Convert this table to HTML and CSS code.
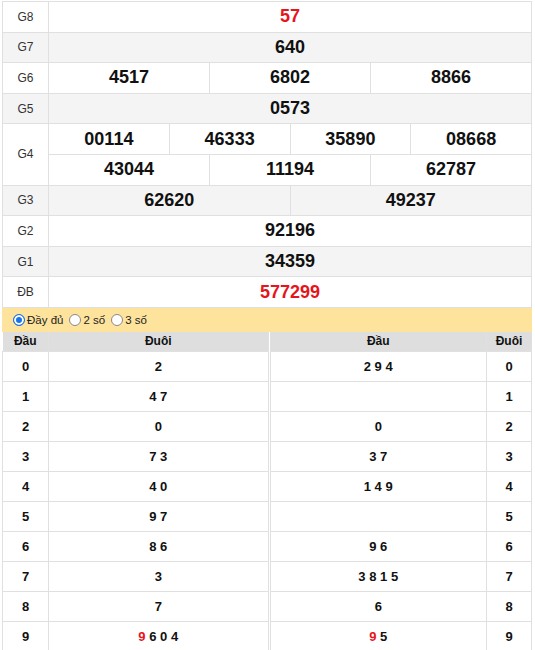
FILE: index.html
```html
<!DOCTYPE html>
<html>
<head>
<meta charset="utf-8">
<link rel="stylesheet" href="styles.css">
</head>
<body>
<div class="wrap">
  <table class="prize">
    <colgroup>
      <col class="c-label">
      <col><col><col><col><col><col><col><col><col><col><col><col>
    </colgroup>
    <tr><td class="lbl">G8</td><td colspan="12" class="num red">57</td></tr>
    <tr class="alt"><td class="lbl">G7</td><td colspan="12" class="num">640</td></tr>
    <tr><td class="lbl">G6</td><td colspan="4" class="num">4517</td><td colspan="4" class="num">6802</td><td colspan="4" class="num">8866</td></tr>
    <tr class="alt"><td class="lbl">G5</td><td colspan="12" class="num">0573</td></tr>
    <tr><td class="lbl" rowspan="2">G4</td><td colspan="3" class="num">00114</td><td colspan="3" class="num">46333</td><td colspan="3" class="num">35890</td><td colspan="3" class="num">08668</td></tr>
    <tr><td colspan="4" class="num">43044</td><td colspan="4" class="num">11194</td><td colspan="4" class="num">62787</td></tr>
    <tr class="alt"><td class="lbl">G3</td><td colspan="6" class="num">62620</td><td colspan="6" class="num">49237</td></tr>
    <tr><td class="lbl">G2</td><td colspan="12" class="num">92196</td></tr>
    <tr class="alt"><td class="lbl">G1</td><td colspan="12" class="num">34359</td></tr>
    <tr><td class="lbl">ĐB</td><td colspan="12" class="num red">577299</td></tr>
  </table>

  <div class="opts">
    <label class="opt"><span class="radio on"></span>Đầy đủ</label>
    <label class="opt"><span class="radio"></span>2 số</label>
    <label class="opt"><span class="radio"></span>3 số</label>
  </div>

  <div class="loto">
    <table class="lt left">
      <colgroup><col class="c-head"><col></colgroup>
      <tr class="hd"><th>Đầu</th><th>Đuôi</th></tr>
      <tr><td>0</td><td>2</td></tr>
      <tr><td>1</td><td>4 7</td></tr>
      <tr><td>2</td><td>0</td></tr>
      <tr><td>3</td><td>7 3</td></tr>
      <tr><td>4</td><td>4 0</td></tr>
      <tr><td>5</td><td>9 7</td></tr>
      <tr><td>6</td><td>8 6</td></tr>
      <tr><td>7</td><td>3</td></tr>
      <tr><td>8</td><td>7</td></tr>
      <tr><td>9</td><td><span class="red">9</span> 6 0 4</td></tr>
    </table>
    <table class="lt right">
      <colgroup><col><col class="c-tail"></colgroup>
      <tr class="hd"><th>Đầu</th><th>Đuôi</th></tr>
      <tr><td>2 9 4</td><td>0</td></tr>
      <tr><td></td><td>1</td></tr>
      <tr><td>0</td><td>2</td></tr>
      <tr><td>3 7</td><td>3</td></tr>
      <tr><td>1 4 9</td><td>4</td></tr>
      <tr><td></td><td>5</td></tr>
      <tr><td>9 6</td><td>6</td></tr>
      <tr><td>3 8 1 5</td><td>7</td></tr>
      <tr><td>6</td><td>8</td></tr>
      <tr><td><span class="red">9</span> 5</td><td>9</td></tr>
    </table>
  </div>
</div>
</body>
</html>
```

FILE: styles.css
```css
html, body {
  margin: 0;
  padding: 0;
  background: #fff;
}
body {
  font-family: "Liberation Sans", Arial, sans-serif;
  color: #111;
}
.wrap {
  width: 530px;
  padding: 1px 0 0 2px;
}
table {
  border-collapse: collapse;
  table-layout: fixed;
}
.prize {
  width: 530px;
}
.prize td {
  border: 1px solid #e0e0e0;
  height: 29.6px;
  padding: 0;
  text-align: center;
}
.c-label {
  width: 46px;
}
.prize .alt td {
  background: #f4f4f4;
}
.lbl {
  font-size: 12px;
  color: #333;
  font-weight: normal;
}
.num {
  font-size: 18px;
  font-weight: bold;
  color: #111;
}
.red {
  color: #e8141c !important;
}
.opts {
  display: flex;
  align-items: center;
  height: 24px;
  background: #fde39c;
  padding-left: 11px;
  gap: 6px;
  font-size: 11.5px;
  color: #222;
}
.opt {
  display: flex;
  align-items: center;
  gap: 2px;
}
.radio {
  width: 10px;
  height: 10px;
  border: 1px solid #8a8a8a;
  border-radius: 50%;
  background: #fff;
  box-sizing: content-box;
}
.radio.on {
  border-color: #1a73e8;
  background: #1a73e8;
  box-shadow: inset 0 0 0 2px #fff;
}
.loto {
  display: flex;
  gap: 1px;
}
.lt.left {
  width: 267px;
}
.lt.right {
  width: 263px;
}
.c-head {
  width: 46px;
}
.c-tail {
  width: 45px;
}
.lt th {
  background: #dedede;
  height: 19px;
  padding: 0;
  font-size: 12px;
  font-weight: bold;
  text-align: center;
  border-left: 1px solid #e0e0e0;
  border-right: 1px solid #e0e0e0;
}
.lt.left th {
  border-left: none;
}
.lt.left th + th {
  border-left: none;
}
.lt.right th:first-child {
  border-right: none;
}
.lt td {
  border: 1px solid #e0e0e0;
  height: 29px;
  padding: 0;
  text-align: center;
  font-size: 13px;
  font-weight: bold;
  color: #111;
}
```
